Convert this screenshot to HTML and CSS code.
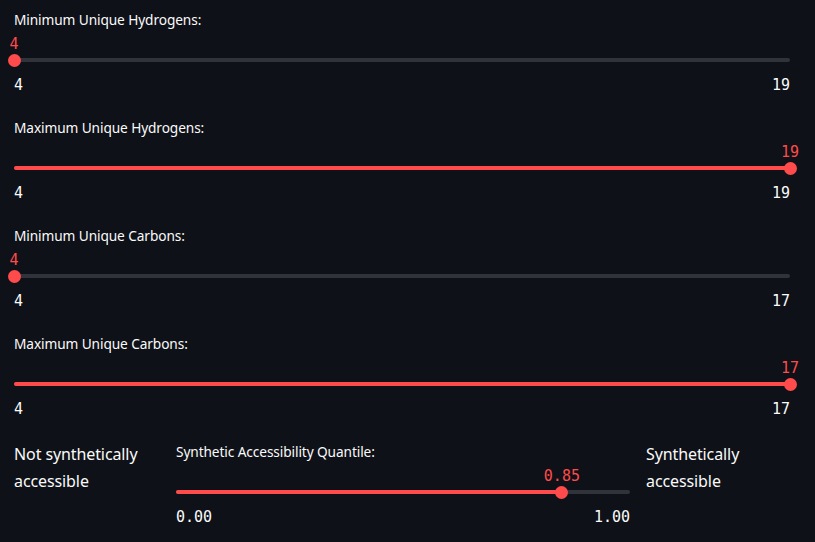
FILE: index.html
```html
<!DOCTYPE html>
<html>
<head>
<meta charset="utf-8">
<link rel="stylesheet" href="styles.css">
</head>
<body>
<main class="page">
  <section class="slider">
    <div class="label">Minimum Unique Hydrogens:</div>
    <div class="rail">
      <div class="track"><div class="fill" style="width:0%"></div></div>
      <div class="thumb" style="left:0%"><span class="value">4</span></div>
    </div>
    <div class="ticks"><span>4</span><span>19</span></div>
  </section>
  <section class="slider">
    <div class="label">Maximum Unique Hydrogens:</div>
    <div class="rail">
      <div class="track"><div class="fill" style="width:100%"></div></div>
      <div class="thumb" style="left:100%"><span class="value">19</span></div>
    </div>
    <div class="ticks"><span>4</span><span>19</span></div>
  </section>
  <section class="slider">
    <div class="label">Minimum Unique Carbons:</div>
    <div class="rail">
      <div class="track"><div class="fill" style="width:0%"></div></div>
      <div class="thumb" style="left:0%"><span class="value">4</span></div>
    </div>
    <div class="ticks"><span>4</span><span>17</span></div>
  </section>
  <section class="slider">
    <div class="label">Maximum Unique Carbons:</div>
    <div class="rail">
      <div class="track"><div class="fill" style="width:100%"></div></div>
      <div class="thumb" style="left:100%"><span class="value">17</span></div>
    </div>
    <div class="ticks"><span>4</span><span>17</span></div>
  </section>
  <section class="columns">
    <p class="side">Not synthetically accessible</p>
    <div class="slider slider-inline">
      <div class="label">Synthetic Accessibility Quantile:</div>
      <div class="rail">
        <div class="track"><div class="fill" style="width:85%"></div></div>
        <div class="thumb" style="left:85%"><span class="value">0.85</span></div>
      </div>
      <div class="ticks"><span>0.00</span><span>1.00</span></div>
    </div>
    <p class="side">Synthetically accessible</p>
  </section>
</main>
</body>
</html>
```

FILE: styles.css
```css
* { box-sizing: border-box; }

html, body {
  margin: 0;
  padding: 0;
  background: #0e1117;
  color: #fafafa;
  font-family: "Source Sans Pro", "Noto Sans", "Liberation Sans", sans-serif;
}

.page {
  width: 815px;
  height: 542px;
  padding: 0 25px 0 14px;
  overflow: hidden;
}

.slider {
  height: 108px;
  padding-top: 10px;
}

.label {
  font-size: 13.7px;
  line-height: 20px;
  height: 20px;
  letter-spacing: -0.1px;
  white-space: nowrap;
}

.rail {
  position: relative;
  margin-top: 24px;
  height: 12px;
}

.track {
  position: absolute;
  left: 0;
  right: 0;
  top: 4px;
  height: 4px;
  border-radius: 2px;
  background: #31333b;
}

.fill {
  height: 100%;
  border-radius: 2px;
  background: #ff4b4b;
}

.thumb {
  position: absolute;
  top: -0.5px;
  width: 13px;
  height: 13px;
  margin-left: -6.5px;
  border-radius: 50%;
  background: #ff4b4b;
}

.value {
  position: absolute;
  left: 50%;
  bottom: 13px;
  transform: translateX(-50%);
  font-family: "DejaVu Sans Mono", "Liberation Mono", monospace;
  font-size: 15px;
  line-height: 20px;
  color: #ff4b4b;
  white-space: nowrap;
}

.ticks {
  display: flex;
  justify-content: space-between;
  margin-top: 9px;
  font-family: "DejaVu Sans Mono", "Liberation Mono", monospace;
  font-size: 15px;
  line-height: 20px;
}

.columns {
  display: grid;
  grid-template-columns: 146px 454px 1fr;
  column-gap: 16px;
}

.slider-inline {
  height: auto;
}

.side {
  margin: 0;
  padding-top: 9px;
  font-size: 16px;
  line-height: 27px;
  letter-spacing: -0.1px;
}
```
